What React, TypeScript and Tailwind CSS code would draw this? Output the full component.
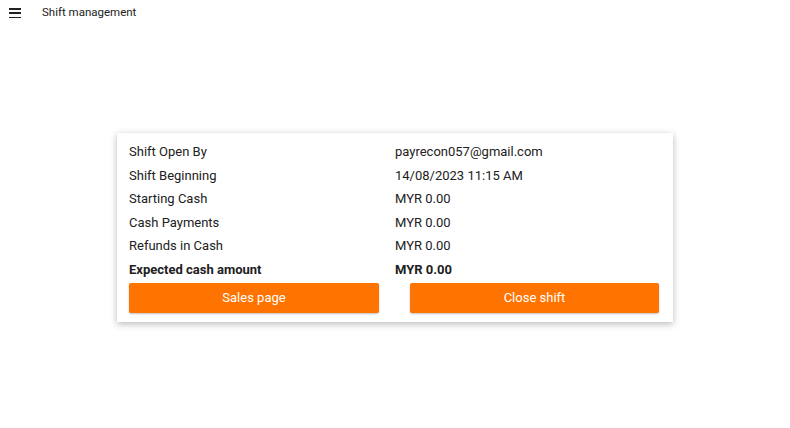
const ROWS: { label: string; value: string; bold?: boolean }[] = [
  { label: "Shift Open By", value: "payrecon057@gmail.com" },
  { label: "Shift Beginning", value: "14/08/2023 11:15 AM" },
  { label: "Starting Cash", value: "MYR 0.00" },
  { label: "Cash Payments", value: "MYR 0.00" },
  { label: "Refunds in Cash", value: "MYR 0.00" },
  { label: "Expected cash amount", value: "MYR 0.00", bold: true },
];

export default function App() {
  return (
    <div className="min-h-[428px] w-full bg-white font-['Roboto',sans-serif] text-[#212121]">
      {/* Top bar */}
      <div className="flex h-[26px] items-center">
        <button className="ml-[9px] flex h-[12px] w-[12px] flex-col justify-between py-[1px]">
          <span className="block h-[1.5px] w-full bg-[#222]" />
          <span className="block h-[1.5px] w-full bg-[#222]" />
          <span className="block h-[1.5px] w-full bg-[#222]" />
        </button>
        <span className="ml-[21px] text-[11.5px] text-[#222]">Shift management</span>
      </div>

      {/* Shift card */}
      <div className="mx-auto mt-[107px] w-[556px] bg-white px-3 pb-[9px] pt-[7px] shadow-[0_2px_7px_rgba(0,0,0,0.28)]">
        {ROWS.map((row) => (
          <div
            key={row.label}
            className={`grid h-[23.6px] grid-cols-2 items-center text-[13px] ${row.bold ? "font-bold" : ""}`}
          >
            <span>{row.label}</span>
            <span>{row.value}</span>
          </div>
        ))}
        <div className="mt-[1.5px] grid grid-cols-2">
          <button className="mr-[16px] h-[30px] rounded-[2px] bg-[#ff7400] text-[13px] text-white shadow-[0_1px_2px_rgba(0,0,0,0.25)]">
            Sales page
          </button>
          <button className="ml-[15px] mr-[2px] h-[30px] rounded-[2px] bg-[#ff7400] text-[13px] text-white shadow-[0_1px_2px_rgba(0,0,0,0.25)]">
            Close shift
          </button>
        </div>
      </div>
    </div>
  );
}
